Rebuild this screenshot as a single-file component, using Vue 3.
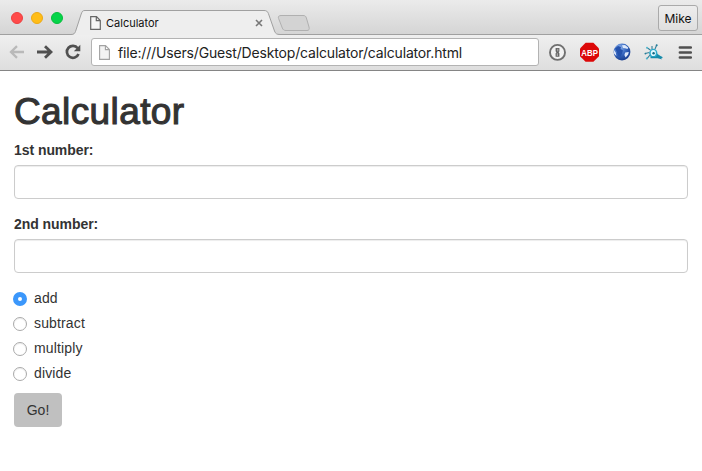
<script setup>
import { ref } from 'vue'

const operations = ['add', 'subtract', 'multiply', 'divide']
const operation = ref('add')
const first = ref('')
const second = ref('')
</script>

<template>
  <div class="window">
    <header class="tabstrip">
      <div class="lights"><i class="red"></i><i class="yellow"></i><i class="green"></i></div>
      <div class="tab">
        <svg class="tab-shape" width="209" height="26" viewBox="0 0 209 26">
          <path d="M0 25.5C3 25.5 3.6 24.5 4.5 22.5L10.2 5C11.2 2.2 11.8 1.5 14 1.5H193C195.5 1.5 196.4 2.3 197.4 4.5L203.5 22C204.4 24.6 205.8 25.5 209 25.5V26H0Z" fill="#eee" />
          <path d="M0 25.5C3 25.5 3.6 24.5 4.5 22.5L10.2 5C11.2 2.2 11.8 1.5 14 1.5H193C195.5 1.5 196.4 2.3 197.4 4.5L203.5 22C204.4 24.6 205.8 25.5 209 25.5" fill="none" stroke="#a0a0a0" />
        </svg>
        <svg class="tab-page" width="11" height="14" viewBox="0 0 11 14">
          <path d="M.7.7H6.5L10.3 4.5V13.3H.7ZM6.3.7V4.7H10.3" fill="#f6f6f6" stroke="#666" stroke-width="1.2" />
        </svg>
        <span class="tab-title">Calculator</span>
        <svg class="tab-close" width="8" height="8" viewBox="0 0 8 8"><path d="M1 1L7 7M7 1L1 7" stroke="#777" stroke-width="1.6" /></svg>
      </div>
      <svg class="newtab" width="34" height="18" viewBox="0 0 34 18">
        <path d="M4 1.5H26C28 1.5 28.7 2 29.4 4L32 13C32.6 15.3 32.1 16.5 30 16.5H9C7 16.5 6 15.8 5.3 14L1.6 4.5C.9 2.6 1.8 1.5 4 1.5Z" fill="#d3d3d3" stroke="#b0b0b0" />
      </svg>
      <button class="profile">Mike</button>
    </header>

    <nav class="toolbar">
      <svg class="nav-icon" width="16" height="14" viewBox="0 0 16 14"><path d="M15 7H2M8 1.2L2 7L8 12.8" fill="none" stroke="#b9b9b9" stroke-width="2.3" /></svg>
      <svg class="nav-icon forward" width="16" height="14" viewBox="0 0 16 14"><path d="M0 7H13M8 1.2L14 7L8 12.8" fill="none" stroke="#505050" stroke-width="2.8" /></svg>
      <svg class="nav-icon reload" width="16" height="16" viewBox="0 0 16 16">
        <path d="M12.7 4.2A6 6 0 1 0 13.5 10" fill="none" stroke="#505050" stroke-width="2.7" />
        <path d="M15.3 .8V7.3H8.8Z" fill="#505050" />
      </svg>
      <div class="address">
        <svg width="11" height="15" viewBox="0 0 11 15"><path d="M.6.6H6.5L10.4 4.5V14.4H.6ZM6.4.6V4.6H10.4" fill="#f3f3f3" stroke="#a2a2a2" stroke-width="1.1" /></svg>
        <span class="url">file:///Users/Guest/Desktop/calculator/calculator.html</span>
      </div>
      <div class="extensions">
        <svg width="18" height="18" viewBox="0 0 18 18">
          <circle cx="8.5" cy="9.4" r="7.5" fill="#f2f2f2" stroke="#707070" stroke-width="1.9" />
          <path d="M6.6 5H10.4V8.3L9.7 9.4L10.4 10.3V13.8H6.6V10.3L7.4 9.4L6.6 8.3Z" fill="#666" />
          <path d="M8.8 5.8V8.4M8.3 10.3V13" stroke="#ddd" stroke-width=".7" />
        </svg>
        <svg width="20" height="20" viewBox="0 0 20 20">
          <path d="M5.6 .8H13.4L19 6.4V14.2L13.4 19.8H5.6L0 14.2V6.4Z" fill="#dc0808" />
          <text x="9.6" y="13.5" text-anchor="middle" font-family="Liberation Sans, sans-serif" font-size="9.4" font-weight="700" fill="#fff" textLength="16.5" lengthAdjust="spacingAndGlyphs">ABP</text>
        </svg>
        <svg class="globe" width="18" height="18" viewBox="0 0 18 18">
          <defs><radialGradient id="globe" cx=".35" cy=".25" r=".8"><stop offset="0" stop-color="#91b4ec" /><stop offset=".5" stop-color="#3768c0" /><stop offset="1" stop-color="#153a8c" /></radialGradient></defs>
          <circle cx="9" cy="9" r="8.4" fill="url(#globe)" />
          <path d="M2 5.5L5 3L8 4L7.6 6L10 7.4L9 10.5L7.4 14L5 12.5L3.8 9Z" fill="#2452ad" />
          <path d="M9 2.2L12 2L15.2 4.6L14.6 6L12 5.2L10 5ZM1 7L2.8 9.4L3.4 13L1 10.5ZM12.2 9.6L15.8 9L15.2 11.5L12.6 14.6L11.4 12Z" fill="#dce8fb" />
        </svg>
        <svg class="bug" width="20" height="18" viewBox="0 0 20 18">
          <path d="M6.4 7L3.5 5M5.5 9.5L1 10.5M6 12L3 15.6M11 6L12.7 2M8 6V3" fill="none" stroke="#327f98" stroke-width="1.1" />
          <path d="M12 10L18.8 14.4L17 15.5L18 16.4L11.4 14.2Z" fill="#168cac" />
          <ellipse cx="9.3" cy="10.3" rx="4.1" ry="4.6" fill="#2aa9cb" />
          <ellipse cx="9.3" cy="10" rx="2.6" ry="3.1" fill="#e2f9ff" />
          <circle cx="9.6" cy="10.2" r="1.2" fill="#116a86" />
          <path d="M6.5 14.5H18.2" stroke="#158aaa" stroke-width="1.5" />
          <circle cx="3" cy="4.8" r="1" fill="#50b6cd" /><circle cx="1.4" cy="10.6" r=".9" fill="#277d99" /><circle cx="2.9" cy="15.5" r="1.1" fill="#50b6cd" /><circle cx="12.7" cy="2.2" r="1" fill="#277d99" />
        </svg>
        <svg width="14" height="14" viewBox="0 0 14 14"><path d="M1.9 2.5H12.9M1.9 7.5H12.9M1.9 12.5H12.9" stroke="#505050" stroke-width="2.6" stroke-linecap="round" /></svg>
      </div>
    </nav>

    <main class="content">
      <h1>Calculator</h1>
      <form @submit.prevent>
        <div class="field"><label for="first">1st number:</label><input id="first" v-model="first" type="text"></div>
        <div class="field"><label for="second">2nd number:</label><input id="second" v-model="second" type="text"></div>
        <div class="choices">
          <label v-for="item in operations" :key="item" class="choice">
            <input v-model="operation" type="radio" name="operation" :value="item">
            <span>{{ item }}</span>
          </label>
        </div>
        <button class="go" type="submit">Go!</button>
      </form>
    </main>
  </div>
</template>

<style>
body { margin: 0; overflow: hidden; background: #fff; }
</style>

<style scoped>
* { box-sizing: border-box; }
svg { display: block; flex: none; }
.window { width: 702px; height: 471px; background: #fff; color: #333; overflow: hidden; }
.tabstrip { height: 35px; display: flex; align-items: flex-start; background: linear-gradient(#ebebeb, #d5d5d5); border-bottom: 1px solid #a0a0a0; }
.lights { display: flex; gap: 8px; padding: 12px 0 0 11px; }
.lights i { width: 12px; height: 12px; border-radius: 50%; border: 1px solid; }
.lights .red { background: #ff4b4a; border-color: #ec4040; }
.lights .yellow { background: #ffbd17; border-color: #eca915; }
.lights .green { background: #05d449; border-color: #07bd3c; }
.tab { position: relative; display: flex; align-items: center; width: 209px; height: 26px; margin: 9px 0 0 8px; padding: 2px 17px 0 19px; font: 11px/14px Inter, sans-serif; color: #111; }
.tab-shape { position: absolute; inset: 0; }
.tab-page, .tab-title, .tab-close { position: relative; }
.tab-title { margin-left: 5px; }
.tab-close { margin-left: auto; }
.newtab { margin: 14px 0 0 -3px; }
.profile { width: 40px; height: 26px; margin: 5px 4px 0 auto; padding: 1px 0 0; border: 1px solid #aaa; border-radius: 3px; background: linear-gradient(#ededed, #dfdfdf); font: 12px/20px Inter, sans-serif; color: #111; }
.toolbar { height: 36px; display: flex; align-items: center; padding: 0 10px 1px 9px; background: linear-gradient(#efefef, #dedede); border-bottom: 1px solid #858585; }
.forward { margin-left: 12px; }
.reload { margin-left: 12px; }
.address { display: flex; align-items: center; width: 448px; height: 28px; margin-left: 10px; padding-left: 7px; border: 1px solid #b3b3b3; border-radius: 3px; background: #fff; }
.url { margin-left: 8px; padding-top: 2px; font: 14px/20px Inter, sans-serif; color: #222; white-space: nowrap; letter-spacing: -.165px; }
.extensions { flex: 1; display: flex; align-items: center; justify-content: space-between; padding-left: 10px; }
.globe { margin: 0 1px 0 -1px; }
.bug { margin: 0 1px 0 -1px; }
.content { padding: 21px 14px; font: 14px/20px "Liberation Sans", sans-serif; }
h1 { margin: 0 0 8px; font-size: 37px; font-weight: 400; line-height: 40px; letter-spacing: .4px; -webkit-text-stroke: 1.1px #333; }
.field { margin-bottom: 15px; }
.field label { display: block; margin-bottom: 5px; font-weight: 700; letter-spacing: -.06px; }
.field input { display: block; width: 100%; height: 34px; padding: 6px 12px; border: 1px solid #ccc; border-radius: 4px; box-shadow: inset 0 1px 1px rgba(0,0,0,.075); font: inherit; outline: 0; }
.choice { display: flex; align-items: center; height: 20px; margin-bottom: 5px; letter-spacing: .15px; }
.choice input { appearance: none; width: 14px; height: 14px; margin: 1px 7px 0 -1px; border: 1px solid #aaa; border-radius: 50%; background: #fff; box-shadow: inset 0 1px 1px rgba(0,0,0,.08); }
.choice input:checked { border: 5px solid #3b97fb; box-shadow: none; }
.go { display: block; width: 48px; height: 34px; margin-top: 10px; padding: 0; border: 0; border-radius: 4px; background: #c0c0c0; font: inherit; color: #333; }
</style>
